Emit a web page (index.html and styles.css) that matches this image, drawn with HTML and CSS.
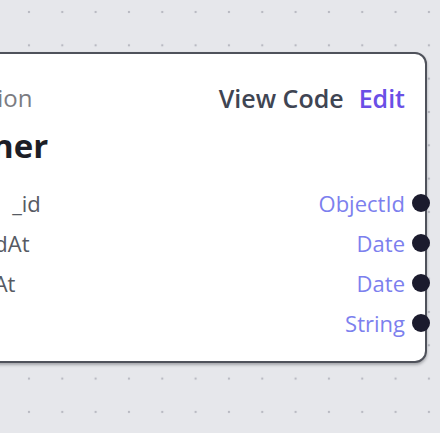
FILE: index.html
```html
<!DOCTYPE html>
<html lang="en">
<head>
<meta charset="utf-8">
<title>Partner collection</title>
<link rel="stylesheet" href="styles.css">
</head>
<body>
<div class="canvas">
  <div class="node">
    <div class="node-head">
      <div class="node-titles">
        <div class="node-kind">Collection</div>
        <div class="node-name">Partner</div>
      </div>
      <div class="node-actions">
        <span class="action">View Code</span>
        <span class="action action-edit">Edit</span>
      </div>
    </div>
    <div class="fields">
      <div class="field"><span class="field-name"><span class="field-parent">owner</span>_id</span><span class="field-type">ObjectId</span><span class="port"></span></div>
      <div class="field"><span class="field-name">createdAt</span><span class="field-type">Date</span><span class="port"></span></div>
      <div class="field"><span class="field-name">joinedAt</span><span class="field-type">Date</span><span class="port"></span></div>
      <div class="field"><span class="field-name">name</span><span class="field-type">String</span><span class="port"></span></div>
    </div>
  </div>
</div>
</body>
</html>
```

FILE: styles.css
```css
html, body {
  margin: 0;
  padding: 0;
  background: #ffffff;
}
body {
  font-family: "Open Sans", "Noto Sans", sans-serif;
}
.canvas {
  position: relative;
  height: 433px;
  overflow: hidden;
  background-color: #e6e7eb;
  background-image: radial-gradient(circle, #b9bac2 0.9px, rgba(185,186,194,0) 1.6px);
  background-size: 33.33px 33.33px;
  background-position: 12.3px -4.7px;
}
.node {
  position: absolute;
  left: -200px;
  top: 52px;
  width: 627px;
  height: 311px;
  box-sizing: border-box;
  border: 2px solid #4f525b;
  border-radius: 12px;
  background: #ffffff;
  box-shadow: 0 2px 3px rgba(40, 42, 50, 0.35);
  display: flex;
  flex-direction: column;
}
.node-head {
  display: flex;
  justify-content: space-between;
  align-items: flex-start;
  padding: 28px 20px 0 0;
}
.node-titles {
  padding-left: 120px;
  display: flex;
  flex-direction: column;
}
.node-kind {
  font-size: 24px;
  color: #7b7c82;
  line-height: 32px;
}
.node-name {
  margin-top: 8px;
  font-size: 33px;
  font-weight: 700;
  color: #1d1e26;
  line-height: 48px;
}
.node-actions {
  display: flex;
  gap: 15px;
  line-height: 32px;
}
.action {
  font-size: 25px;
  font-weight: 600;
  color: #3f4553;
}
.action-edit {
  color: #6a4fe6;
}
.fields {
  display: flex;
  flex-direction: column;
  padding: 13px 0 0 0;
}
.field {
  position: relative;
  display: flex;
  justify-content: space-between;
  align-items: center;
  height: 40px;
  padding: 0 20px 0 128px;
}
.field-name {
  display: flex;
  font-size: 22px;
  color: #565a63;
}
.field-parent {
  margin-right: 17px;
}
.field-type {
  font-size: 22px;
  color: #7c80ee;
}
.port {
  position: absolute;
  right: -5px;
  top: 50%;
  width: 18px;
  height: 18px;
  margin-top: -9px;
  border-radius: 50%;
  background: #1b1b2d;
}
```
